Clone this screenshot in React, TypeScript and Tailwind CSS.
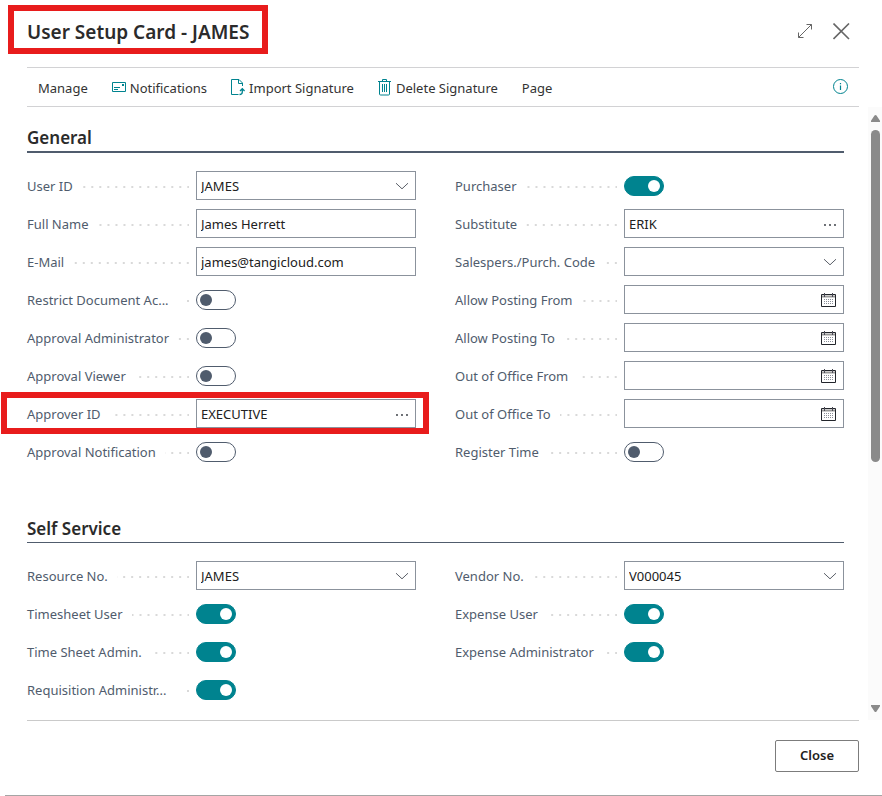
import type { ReactNode } from "react";

type FieldKind = "text" | "select" | "lookup" | "date" | "toggle";

interface FieldDef {
  id: string;
  label: string;
  kind: FieldKind;
  value?: string;
  on?: boolean;
  marked?: boolean;
}

const generalLeft: FieldDef[] = [
  { id: "user-id", label: "User ID", kind: "select", value: "JAMES" },
  { id: "full-name", label: "Full Name", kind: "text", value: "James Herrett" },
  { id: "email", label: "E-Mail", kind: "text", value: "james@tangicloud.com" },
  { id: "restrict", label: "Restrict Document Ac...", kind: "toggle" },
  { id: "approval-admin", label: "Approval Administrator", kind: "toggle" },
  { id: "approval-viewer", label: "Approval Viewer", kind: "toggle" },
  { id: "approver-id", label: "Approver ID", kind: "lookup", value: "EXECUTIVE", marked: true },
  { id: "approval-notification", label: "Approval Notification", kind: "toggle" },
];

const generalRight: FieldDef[] = [
  { id: "purchaser", label: "Purchaser", kind: "toggle", on: true },
  { id: "substitute", label: "Substitute", kind: "lookup", value: "ERIK" },
  { id: "salespers", label: "Salespers./Purch. Code", kind: "select", value: "" },
  { id: "posting-from", label: "Allow Posting From", kind: "date" },
  { id: "posting-to", label: "Allow Posting To", kind: "date" },
  { id: "ooo-from", label: "Out of Office From", kind: "date" },
  { id: "ooo-to", label: "Out of Office To", kind: "date" },
  { id: "register-time", label: "Register Time", kind: "toggle" },
];

const selfLeft: FieldDef[] = [
  { id: "resource-no", label: "Resource No.", kind: "select", value: "JAMES" },
  { id: "timesheet-user", label: "Timesheet User", kind: "toggle", on: true },
  { id: "timesheet-admin", label: "Time Sheet Admin.", kind: "toggle", on: true },
  { id: "requisition-admin", label: "Requisition Administr...", kind: "toggle", on: true },
];

const selfRight: FieldDef[] = [
  { id: "vendor-no", label: "Vendor No.", kind: "select", value: "V000045" },
  { id: "expense-user", label: "Expense User", kind: "toggle", on: true },
  { id: "expense-admin", label: "Expense Administrator", kind: "toggle", on: true },
];

function Chevron() {
  return (
    <svg width="14" height="8" viewBox="0 0 14 8" fill="none" stroke="#5a5f68">
      <path d="M1 1.200L7 6.800l6-5.600" />
    </svg>
  );
}

function Dots() {
  return (
    <svg width="14" height="4" viewBox="0 0 14 4" fill="#2b2f36">
      <circle cx="2" cy="2" r=".9" />
      <circle cx="7" cy="2" r=".9" />
      <circle cx="12" cy="2" r=".9" />
    </svg>
  );
}

function CalendarIcon() {
  return (
    <svg width="15" height="15" viewBox="0 0 15 15" fill="none">
      <path d="M1 3.500h13" stroke="#9a9a9a" strokeWidth="2" />
      <path d="M.5 1.500h14v12H.5z" stroke="#22252b" />
      <path d="M3.500 0v4M11.500 0v4" stroke="#4a4a55" />
      <path d="M3 6.500h9M3 8.500h9M3 10.500h9" stroke="#8b8f99" strokeDasharray="1 1" />
    </svg>
  );
}

const boxClass =
  "block h-[29px] w-full appearance-none rounded-none border border-[#8b929c] bg-white pl-1 pr-8 text-[13px] text-[#212121] outline-none focus:border-[#00838f]";

function Control({ field }: { field: FieldDef }) {
  if (field.kind === "toggle") {
    return (
      <input
        id={field.id}
        type="checkbox"
        role="switch"
        defaultChecked={field.on}
        className="flex h-5 w-10 cursor-pointer appearance-none items-center rounded-full border border-[#505c6d] bg-white px-[3px] before:size-3 before:rounded-full before:bg-[#505c6d] checked:justify-end checked:border-[#00838f] checked:bg-[#00838f] checked:before:bg-white"
      />
    );
  }
  if (field.kind === "select") {
    return (
      <div className="relative flex-1 self-start">
        <select id={field.id} defaultValue={field.value} className={`${boxClass} pt-0.5`}>
          <option value={field.value}>{field.value}</option>
        </select>
        <span className="pointer-events-none absolute inset-y-0 right-[7px] flex items-center">
          <Chevron />
        </span>
      </div>
    );
  }
  return (
    <div className="relative flex-1 self-start">
      <input id={field.id} type="text" defaultValue={field.value} className={boxClass} />
      {field.kind !== "text" && (
        <button
          type="button"
          aria-label={field.kind === "date" ? `Pick a date for ${field.label}` : `Look up ${field.label}`}
          className={`absolute inset-y-0 flex items-center pt-0.5 ${field.kind === "date" ? "right-2" : "right-[7px]"}`}
        >
          {field.kind === "date" ? <CalendarIcon /> : <Dots />}
        </button>
      )}
    </div>
  );
}

function Field({ field }: { field: FieldDef }) {
  const shortened = field.label.endsWith("...");
  return (
    <div className="relative flex h-[30px] items-center">
      <div className="flex w-[169px] shrink-0 items-center pr-[7px]">
        <label
          htmlFor={field.id}
          className={`shrink-0 whitespace-nowrap text-[13px] leading-5 text-[#505c6d] ${shortened ? "min-w-[147px]" : ""}`}
        >
          {field.label}
        </label>
        <span className="ml-[9px] h-2 flex-1 bg-[linear-gradient(to_left,#d9d9d9_2px,transparent_2px)] bg-[length:8px_2px] bg-[position:right_4px] bg-repeat-x" />
      </div>
      <Control field={field} />
      {field.marked && (
        <span className="pointer-events-none absolute -left-[26px] -right-[13px] -top-[7px] h-[42px] border-6 border-[#e81c1c]" />
      )}
    </div>
  );
}

function Section({ title, columns, rule }: { title: string; columns: FieldDef[][]; rule: string }) {
  return (
    <section>
      <h2 className={`pb-px text-[17px] font-semibold leading-6 text-[#2b2b2b] ${rule}`}>{title}</h2>
      <div className="mt-[18px] grid grid-cols-2 gap-x-[39px]">
        {columns.map((fields, i) => (
          <div key={i} className="flex flex-col gap-2">
            {fields.map((f) => (
              <Field key={f.id} field={f} />
            ))}
          </div>
        ))}
      </div>
    </section>
  );
}

function ToolButton({ icon, children }: { icon?: ReactNode; children: ReactNode }) {
  return (
    <button type="button" className="flex items-center gap-1 whitespace-nowrap text-[13px] leading-5 text-[#333]">
      {icon}
      {children}
    </button>
  );
}

const NotificationIcon = (
  <svg width="14" height="14" viewBox="0 0 14 14" fill="none" stroke="#00838f">
    <path d="M.5 1.500h13v9H.5z" />
    <path d="M2 6.500h6M2 8.500h4" />
    <path d="M10 4h2" strokeWidth="2" />
  </svg>
);

const ImportIcon = (
  <svg width="14" height="18" viewBox="0 0 14 18" fill="none" stroke="#00838f">
    <path d="M7.500 15.500H.5V.5h7.500l3.500 3.500V7" />
    <path d="M7.500 .5V4.500H11.500" />
    <path d="M8.500 15.500c2 0 2.800-.8 2.800-2.500V10M9 12l2.300-2.300 2.300 2.300" strokeWidth="1.3" />
  </svg>
);

const TrashIcon = (
  <svg width="14" height="18" viewBox="0 0 14 18" fill="none" stroke="#00838f">
    <path d="M0 2.500h13M4.500 2.500v-2h4v2" />
    <path d="M1.500 2.500v12.500q0 1 1 1h8q1 0 1-1V2.500" />
    <path d="M4.500 5v8M6.500 5v8M8.500 5v8" />
  </svg>
);

export default function App() {
  return (
    <div className="flex min-h-screen flex-col bg-white font-['Noto_Sans','Open_Sans',sans-serif]">
      <header className="flex items-start justify-between pl-2 pr-8 pt-[5px]">
        <h1 className="flex h-[49px] items-center border-6 border-[#e81c1c] px-[13px] pt-1 text-[19px] font-semibold leading-6 text-[#2b2b2b]">
          User Setup Card - JAMES
        </h1>
        <div className="flex h-[52px] items-center gap-5">
          <button type="button" aria-label="Expand">
            <svg width="16" height="16" viewBox="0 0 16 16" fill="none" stroke="#666">
              <path d="M1.500 14.500l13-13M9.500 1.500h5v5M1.500 9.500v5h5" />
            </svg>
          </button>
          <button type="button" aria-label="Close dialog">
            <svg width="17" height="17" viewBox="0 0 17 17" fill="none" stroke="#666" strokeWidth="1.6">
              <path d="M.5 .5l15.500 15.500M16 .5L.5 16" />
            </svg>
          </button>
        </div>
      </header>

      <nav className="ml-[27px] mr-[23px] mt-[10px] flex h-10 items-center border-y border-[#d2d2d4] pl-[11px] pr-[10px]">
        <div className="flex flex-1 items-center gap-6 pt-0.5">
          <ToolButton>Manage</ToolButton>
          <ToolButton icon={NotificationIcon}>Notifications</ToolButton>
          <ToolButton icon={ImportIcon}>Import Signature</ToolButton>
          <ToolButton icon={TrashIcon}>Delete Signature</ToolButton>
          <ToolButton>Page</ToolButton>
        </div>
        <button type="button" aria-label="Information">
          <svg width="16" height="16" viewBox="0 0 16 16" fill="none" stroke="#00838f">
            <circle cx="7.500" cy="7.500" r="7" />
            <path d="M7.500 6.500V11M7.500 4V5.200" strokeWidth="1.2" />
          </svg>
        </button>
      </nav>

      <div className="flex flex-1">
        <main className="flex flex-1 flex-col gap-[50px] pb-[15px] pl-[27px] pr-6 pt-[19px]">
          <Section title="General" columns={[generalLeft, generalRight]} rule="border-b-2 border-[#505c6d]" />
          <Section title="Self Service" columns={[selfLeft, selfRight]} rule="border-b border-[#505c6d]" />
        </main>
        <div className="flex w-[14px] flex-col items-center bg-[#fbfbfb] pb-2 pt-2" aria-hidden="true">
          <svg width="9" height="7" viewBox="0 0 9 7" fill="#8a8a8a">
            <path d="M4.500 0q.6 0 1 .6L9 5.800V7H0V5.800L3.500.6q.4-.6 1-.6z" />
          </svg>
          <div className="flex w-[9px] flex-1 flex-col py-2">
            <div className="h-[332px] rounded-full bg-[#8a8a8a]" />
          </div>
          <svg width="9" height="7" viewBox="0 0 9 7" fill="#8a8a8a">
            <path d="M4.500 7q-.6 0-1-.6L0 1.200V0h9v1.200L5.500 6.400q-.4.6-1 .6z" />
          </svg>
        </div>
      </div>

      <footer>
        <div className="ml-[27px] mr-[23px] flex justify-end border-t border-[#cacaca] pb-[23px] pt-[19px]">
          <button
            type="button"
            className="h-8 w-[84px] rounded-xs border border-[#7c7c7c] text-[13px] font-semibold text-[#212121]"
          >
            Close
          </button>
        </div>
        <div className="ml-[5px] h-px bg-[#a5a5a5]" />
      </footer>
    </div>
  );
}
